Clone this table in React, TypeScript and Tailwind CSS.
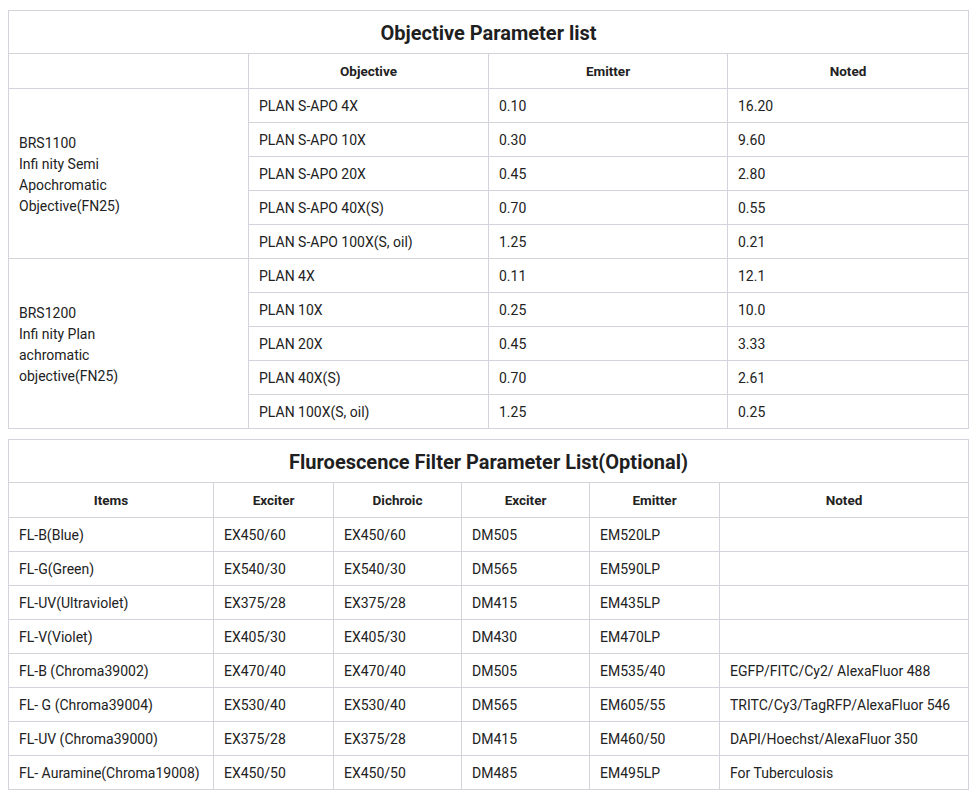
const font = { fontFamily: 'Roboto, "Liberation Sans", sans-serif' };

const objectives = [
  {
    group: ['BRS1100', 'Infi nity Semi', 'Apochromatic', 'Objective(FN25)'],
    rows: [
      ['PLAN S-APO 4X', '0.10', '16.20'],
      ['PLAN S-APO 10X', '0.30', '9.60'],
      ['PLAN S-APO 20X', '0.45', '2.80'],
      ['PLAN S-APO 40X(S)', '0.70', '0.55'],
      ['PLAN S-APO 100X(S, oil)', '1.25', '0.21'],
    ],
  },
  {
    group: ['BRS1200', 'Infi nity Plan', 'achromatic', 'objective(FN25)'],
    rows: [
      ['PLAN 4X', '0.11', '12.1'],
      ['PLAN 10X', '0.25', '10.0'],
      ['PLAN 20X', '0.45', '3.33'],
      ['PLAN 40X(S)', '0.70', '2.61'],
      ['PLAN 100X(S, oil)', '1.25', '0.25'],
    ],
  },
];

const filters = [
  ['FL-B(Blue)', 'EX450/60', 'EX450/60', 'DM505', 'EM520LP', ''],
  ['FL-G(Green)', 'EX540/30', 'EX540/30', 'DM565', 'EM590LP', ''],
  ['FL-UV(Ultraviolet)', 'EX375/28', 'EX375/28', 'DM415', 'EM435LP', ''],
  ['FL-V(Violet)', 'EX405/30', 'EX405/30', 'DM430', 'EM470LP', ''],
  ['FL-B (Chroma39002)', 'EX470/40', 'EX470/40', 'DM505', 'EM535/40', 'EGFP/FITC/Cy2/ AlexaFluor 488'],
  ['FL- G (Chroma39004)', 'EX530/40', 'EX530/40', 'DM565', 'EM605/55', 'TRITC/Cy3/TagRFP/AlexaFluor 546'],
  ['FL-UV (Chroma39000)', 'EX375/28', 'EX375/28', 'DM415', 'EM460/50', 'DAPI/Hoechst/AlexaFluor 350'],
  ['FL- Auramine(Chroma19008)', 'EX450/50', 'EX450/50', 'DM485', 'EM495LP', 'For Tuberculosis'],
];

const cell = 'border border-[#d3d3db] h-[34px] px-[10px] pt-[2px] pb-0 text-[14px] leading-[21px] text-[#222] align-middle';
const head = 'border border-[#d3d3db] h-[35px] px-[10px] pt-[1px] pb-0 text-[13.5px] font-bold text-[#222] text-center align-middle';
const title = 'border border-[#d3d3db] h-[43px] px-[10px] pt-[1px] pb-0 text-[20px] font-bold text-[#1f1f1f] text-center align-middle';

export default function App() {
  return (
    <div className="bg-white min-h-[797px] pt-[10px] pl-[8px]" style={font}>
      <table className="table-fixed border-collapse w-[960px]">
        <colgroup>
          <col className="w-[240px]" />
          <col className="w-[240px]" />
          <col className="w-[239px]" />
          <col className="w-[241px]" />
        </colgroup>
        <tbody>
          <tr>
            <td colSpan={4} className={title}>Objective Parameter list</td>
          </tr>
          <tr>
            <td className={head}></td>
            <td className={head}>Objective</td>
            <td className={head}>Emitter</td>
            <td className={head}>Noted</td>
          </tr>
          {objectives.map((g) =>
            g.rows.map((r, i) => (
              <tr key={g.group[0] + i}>
                {i === 0 && (
                  <td rowSpan={g.rows.length} className={cell}>
                    {g.group.map((l) => (
                      <div key={l}>{l}</div>
                    ))}
                  </td>
                )}
                {r.map((v, j) => (
                  <td key={j} className={cell}>{v}</td>
                ))}
              </tr>
            )),
          )}
        </tbody>
      </table>

      <table className="table-fixed border-collapse w-[960px] mt-[10px]">
        <colgroup>
          <col className="w-[205px]" />
          <col className="w-[120px]" />
          <col className="w-[128px]" />
          <col className="w-[128px]" />
          <col className="w-[130px]" />
          <col className="w-[249px]" />
        </colgroup>
        <tbody>
          <tr>
            <td colSpan={6} className={title}>Fluroescence Filter Parameter List(Optional)</td>
          </tr>
          <tr>
            {['Items', 'Exciter', 'Dichroic', 'Exciter', 'Emitter', 'Noted'].map((h, i) => (
              <td key={i} className={head}>{h}</td>
            ))}
          </tr>
          {filters.map((r) => (
            <tr key={r[0]}>
              {r.map((v, j) => (
                <td key={j} className={cell}>{v}</td>
              ))}
            </tr>
          ))}
        </tbody>
      </table>
    </div>
  );
}
